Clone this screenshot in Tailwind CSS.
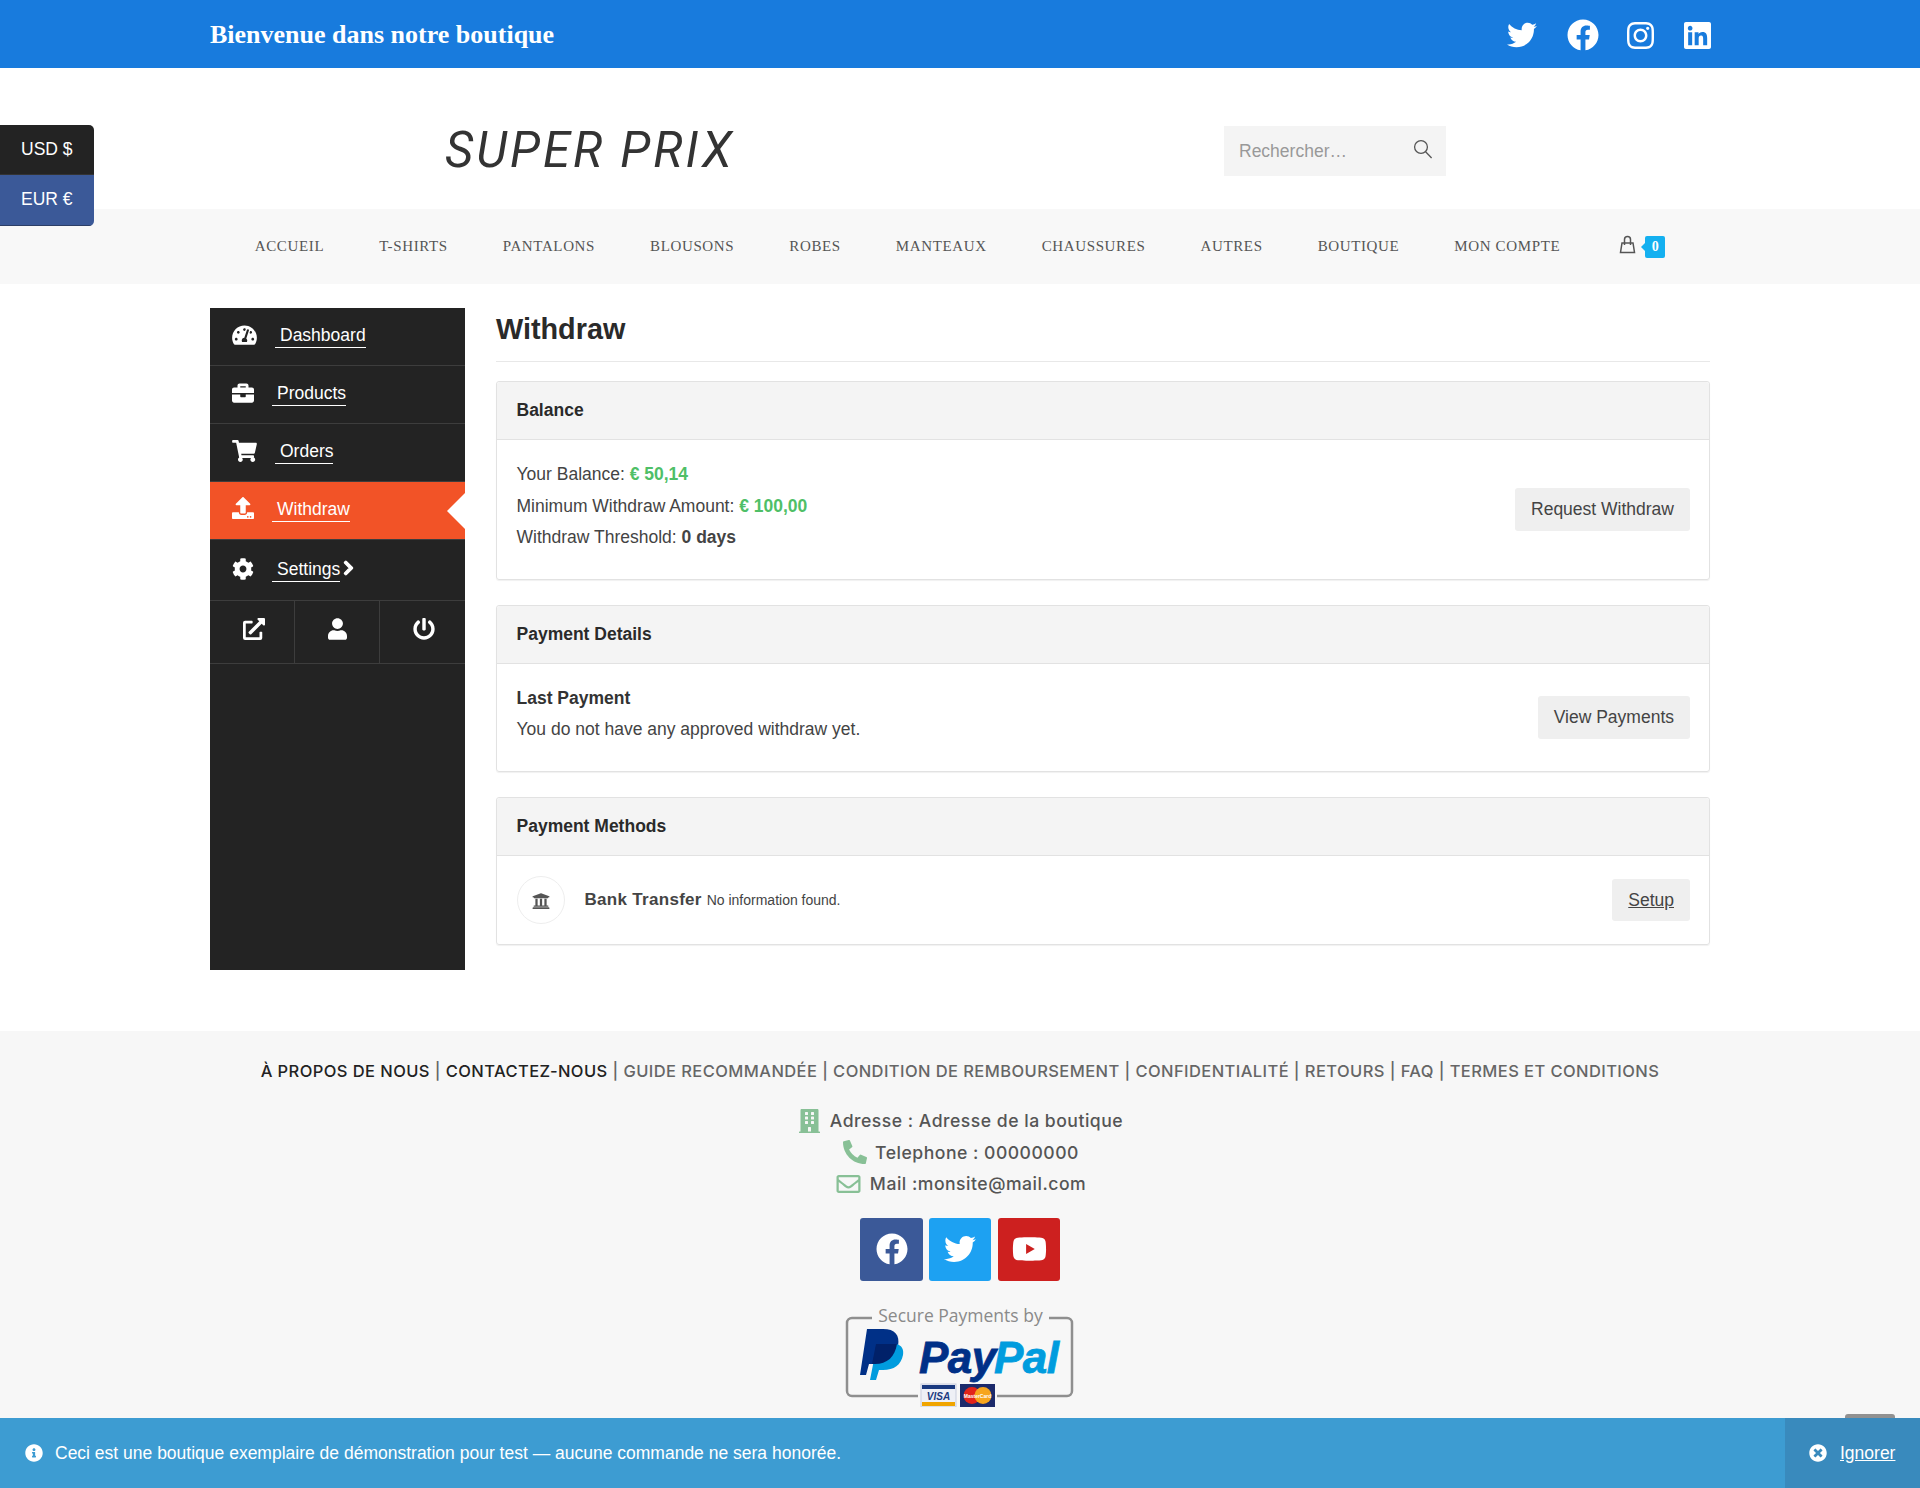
<!DOCTYPE html>
<html lang="fr">
  <head>
    <meta charset="UTF-8" />
    <title>Super Prix - Withdraw</title>
    <script src="https://cdn.jsdelivr.net/npm/@tailwindcss/browser@4"></script>
  </head>
  <body class="relative h-[1488px] overflow-hidden bg-white font-['Liberation_Sans',Arial,sans-serif] text-[17.5px] text-[#444]">
    <!-- top bar -->
    <div class="h-[68px] bg-[#187bdd]">
      <div class="mx-auto flex h-full w-[1500px] items-center justify-between">
        <span class="font-['Liberation_Serif',serif] text-[26px] font-bold text-white">Bienvenue dans notre boutique</span>
        <div class="mr-[-1px] mt-[2px] flex items-center text-white">
          <svg class="h-[30px] w-[30px] fill-current" viewBox="0 0 512 512"><path d="M459.37 151.716c.325 4.548.325 9.097.325 13.645 0 138.72-105.583 298.558-298.558 298.558-59.452 0-114.68-17.219-161.137-47.106 8.447.974 16.568 1.299 25.34 1.299 49.055 0 94.213-16.568 130.274-44.832-46.132-.975-84.792-31.188-98.112-72.772 6.498.974 12.995 1.624 19.818 1.624 9.421 0 18.843-1.3 27.614-3.573-48.081-9.747-84.143-51.98-84.143-102.985v-1.299c13.969 7.797 30.214 12.67 47.431 13.319-28.264-18.843-46.781-51.005-46.781-87.391 0-19.492 5.197-37.36 14.294-52.954 51.655 63.675 129.3 105.258 216.365 109.807-1.624-7.797-2.599-15.918-2.599-24.04 0-57.828 46.782-104.934 104.934-104.934 30.213 0 57.502 12.67 76.67 33.137 23.715-4.548 46.456-13.32 66.599-25.34-7.798 24.366-22.742 44.833-42.56 59.426 19.492-2.273 38.658-7.473 55.371-14.944-12.67 18.843-28.264 35.412-46.782 48.081z"/></svg>
          <svg class="ml-[30px] h-[32px] w-[32px] fill-current" viewBox="0 0 512 512"><path d="M504 256C504 119 393 8 256 8S8 119 8 256c0 123.78 90.69 226.38 209.25 245V327.69h-63V256h63v-54.64c0-62.15 37-96.48 93.67-96.48 27.14 0 55.52 4.84 55.52 4.84v61h-31.28c-30.8 0-40.41 19.12-40.41 38.73V256h68.78l-11 71.69h-57.78V501C413.31 482.38 504 379.78 504 256z"/></svg>
          <svg class="ml-[28px] h-[31px] w-[27px] fill-current" viewBox="0 0 448 512"><path d="M224.1 141c-63.6 0-114.9 51.3-114.9 114.9s51.3 114.9 114.9 114.9S339 319.5 339 255.9 287.7 141 224.1 141zm0 189.6c-41.1 0-74.7-33.5-74.7-74.7s33.5-74.7 74.7-74.7 74.7 33.5 74.7 74.7-33.6 74.7-74.7 74.7zm146.4-194.3c0 14.9-12 26.8-26.8 26.8-14.9 0-26.8-12-26.8-26.8s12-26.8 26.8-26.8 26.8 12 26.8 26.8zm76.1 27.2c-1.7-35.9-9.9-67.7-36.2-93.9-26.2-26.2-58-34.4-93.9-36.2-37-2.1-147.9-2.1-184.9 0-35.8 1.7-67.6 9.9-93.9 36.1s-34.4 58-36.2 93.9c-2.1 37-2.1 147.9 0 184.9 1.7 35.9 9.9 67.7 36.2 93.9s58 34.4 93.9 36.2c37 2.1 147.9 2.1 184.9 0 35.9-1.7 67.7-9.9 93.9-36.2 26.2-26.2 34.4-58 36.2-93.9 2.1-37 2.1-147.8 0-184.8zM398.8 388c-7.8 19.6-22.9 34.7-42.6 42.6-29.5 11.7-99.5 9-132.1 9s-102.7 2.6-132.1-9c-19.6-7.8-34.7-22.9-42.6-42.6-11.7-29.5-9-99.5-9-132.1s-2.6-102.7 9-132.1c7.8-19.6 22.9-34.7 42.6-42.6 29.5-11.7 99.5-9 132.1-9s102.7-2.6 132.1 9c19.6 7.8 34.7 22.9 42.6 42.6 11.7 29.5 9 99.5 9 132.1s2.7 102.7-9 132.1z"/></svg>
          <svg class="ml-[30px] h-[31px] w-[27px] fill-current" viewBox="0 0 448 512"><path d="M416 32H31.9C14.3 32 0 46.5 0 64.3v383.4C0 465.5 14.3 480 31.9 480H416c17.6 0 32-14.5 32-32.3V64.3c0-17.8-14.4-32.3-32-32.3zM135.4 416H69V202.2h66.5V416zm-33.2-243c-21.3 0-38.5-17.3-38.5-38.5S80.9 96 102.2 96c21.2 0 38.5 17.3 38.5 38.5 0 21.3-17.2 38.5-38.5 38.5zm282.1 243h-66.4V312c0-24.8-.5-56.7-34.5-56.7-34.6 0-39.9 27-39.9 54.9V416h-66.4V202.2h63.7v29.2h.9c8.9-16.8 30.6-34.5 62.9-34.5 67.2 0 79.7 44.3 79.7 101.9V416z"/></svg>
        </div>
      </div>
    </div>

    <!-- logo + search -->
    <div class="h-[141px] pt-[24px]">
      <div class="mx-auto flex h-full w-[1500px] items-center pl-[235px]">
        <span class="w-[779px] font-['Roboto',sans-serif] text-[49px] font-normal italic tracking-[3px] text-[#333]">SUPER PRIX</span>
        <div class="flex h-[50px] w-[222px] items-center justify-between bg-[#f4f4f4] pl-[15px] pr-[13px] text-[#999]">
          <span class="pt-[1px]">Rechercher…</span>
          <svg class="mb-[3px] h-[20px] w-[20px]" viewBox="0 0 20 20" fill="none" stroke="#555" stroke-width="1.3"><circle cx="8" cy="8" r="6.4"/><path d="M12.6 12.8 18.6 19"/></svg>
        </div>
      </div>
    </div>

    <!-- nav -->
    <nav class="flex h-[75px] items-center justify-center gap-[55px] bg-[#f8f8f8] font-['Liberation_Serif',serif] text-[15px] tracking-[0.63px] text-[#555]">
      <a>ACCUEIL</a>
      <a>T-SHIRTS</a>
      <a>PANTALONS</a>
      <a>BLOUSONS</a>
      <a>ROBES</a>
      <a>MANTEAUX</a>
      <a>CHAUSSURES</a>
      <a>AUTRES</a>
      <a>BOUTIQUE</a>
      <a>MON COMPTE</a>
      <div class="ml-[4px] flex items-center">
        <svg class="mb-[4px] h-[19px] w-[17px]" viewBox="0 0 17 19" fill="none" stroke="#555" stroke-width="1.5"><path d="M3 8h11l1.500 9.500h-14z"/><path d="M5.500 10V4.500a3 3 0 0 1 6 0V10"/></svg>
        <div class="relative ml-[9px] flex h-[22px] w-[20px] items-center justify-center rounded-[2px] bg-[#14b0f0] font-['Liberation_Serif',serif] text-[14px] font-bold tracking-normal text-white">
          <span class="absolute left-[-4px] top-[7px] h-0 w-0 border-y-[4px] border-r-[4px] border-y-transparent border-r-[#14b0f0]"></span>
          0
        </div>
      </div>
    </nav>

    <!-- dashboard -->
    <div class="mx-auto flex w-[1500px] items-start gap-[31px] pt-[24px]">
      <aside class="h-[662px] w-[255px] shrink-0 bg-[#232323] text-white">
        <a class="flex h-[58px] items-center gap-[18px] border-b border-[#3d3d3d] pl-[22px]">
          <svg class="mb-[3px] h-[22px] w-[25px] fill-current" viewBox="0 0 576 512"><path d="M288 32C128.94 32 0 160.94 0 320c0 52.8 14.25 102.26 39.06 144.8 5.61 9.62 16.3 15.2 27.44 15.2h443c11.14 0 21.83-5.58 27.44-15.2C561.75 422.26 576 372.8 576 320c0-159.06-128.94-288-288-288zm0 64c14.71 0 26.58 10.13 30.32 23.65-1.11 2.26-2.64 4.23-3.45 6.67l-9.22 27.67c-5.13 3.49-10.97 6.01-17.64 6.01-17.67 0-32-14.33-32-32S270.33 96 288 96zM96 384c-17.67 0-32-14.33-32-32s14.33-32 32-32 32 14.33 32 32-14.33 32-32 32zm48-160c-17.67 0-32-14.33-32-32s14.33-32 32-32 32 14.33 32 32-14.33 32-32 32zm246.77-72.41l-61.33 184C343.13 347.33 352 364.54 352 384c0 11.72-3.38 22.55-8.88 32H232.88c-5.5-9.45-8.88-20.28-8.88-32 0-33.94 26.5-61.43 59.9-63.59l61.34-184.01c4.17-12.56 17.73-19.45 30.36-15.17 12.57 4.19 19.35 17.79 15.17 30.36zm14.66 57.2l15.52-46.55c3.47-1.29 7.13-2.23 11.05-2.23 17.67 0 32 14.33 32 32s-14.33 32-32 32c-11.38-.01-20.89-6.28-26.57-15.22zM480 384c-17.67 0-32-14.33-32-32s14.33-32 32-32 32 14.33 32 32-14.33 32-32 32z"/></svg>
          <span class="border-b border-white pl-[5px] pb-[2px] leading-[20px]">Dashboard</span>
        </a>
        <a class="flex h-[58px] items-center gap-[18px] border-b border-[#3d3d3d] pl-[22px]">
          <svg class="mb-[3px] h-[22px] w-[22px] fill-current" viewBox="0 0 512 512"><path d="M320 336c0 8.84-7.16 16-16 16h-96c-8.84 0-16-7.16-16-16v-48H0v144c0 25.6 22.4 48 48 48h416c25.6 0 48-22.4 48-48V288H320v48zm144-208h-80V80c0-25.6-22.4-48-48-48H176c-25.6 0-48 22.4-48 48v48H48c-25.6 0-48 22.4-48 48v80h512v-80c0-25.6-22.4-48-48-48zm-144 0H192V96h128v32z"/></svg>
          <span class="border-b border-white pl-[5px] pb-[2px] leading-[20px]">Products</span>
        </a>
        <a class="flex h-[58px] items-center gap-[18px] border-b border-[#3d3d3d] pl-[22px]">
          <svg class="mb-[3px] h-[22px] w-[25px] fill-current" viewBox="0 0 576 512"><path d="M528.12 301.319l47.273-208C578.806 78.301 567.391 64 551.99 64H159.208l-9.166-44.81C147.758 8.021 137.93 0 126.529 0H24C10.745 0 0 10.745 0 24v16c0 13.255 10.745 24 24 24h69.883l70.248 343.435C147.325 417.1 136 435.222 136 456c0 30.928 25.072 56 56 56s56-25.072 56-56c0-15.674-6.447-29.835-16.824-40h209.647C430.447 426.165 424 440.326 424 456c0 30.928 25.072 56 56 56s56-25.072 56-56c0-22.172-12.888-41.332-31.579-50.405l5.517-24.276c3.413-15.018-8.002-29.319-23.403-29.319H218.117l-6.545-32h293.145c11.206 0 20.92-7.754 23.403-18.681z"/></svg>
          <span class="border-b border-white pl-[5px] pb-[2px] leading-[20px]">Orders</span>
        </a>
        <a class="relative flex h-[58px] items-center gap-[18px] border-b border-[#3d3d3d] bg-[#f25327] pl-[22px]">
          <svg class="mb-[5px] h-[22px] w-[22px] fill-current" viewBox="0 0 512 512"><path d="M296 384h-80c-13.3 0-24-10.7-24-24V192h-87.7c-17.8 0-26.7-21.5-14.1-34.1L242.3 5.700c7.500-7.500 19.800-7.500 27.300 0l152.200 152.200c12.600 12.600 3.700 34.100-14.100 34.100H320v168c0 13.300-10.700 24-24 24zm216-8v112c0 13.300-10.700 24-24 24H24c-13.300 0-24-10.700-24-24V376c0-13.300 10.700-24 24-24h136v8c0 30.900 25.100 56 56 56h80c30.900 0 56-25.100 56-56v-8h136c13.300 0 24 10.700 24 24zm-124 88c0-11-9-20-20-20s-20 9-20 20 9 20 20 20 20-9 20-20zm64 0c0-11-9-20-20-20s-20 9-20 20 9 20 20 20 20-9 20-20z"/></svg>
          <span class="border-b border-white pl-[5px] pb-[2px] leading-[20px]">Withdraw</span>
          <span class="absolute right-0 top-[11px] h-0 w-0 border-y-[18px] border-r-[18px] border-y-transparent border-r-white"></span>
        </a>
        <a class="flex h-[61px] items-center gap-[18px] border-b border-[#3d3d3d] pl-[22px]">
          <svg class="mb-[3px] h-[22px] w-[22px] fill-current" viewBox="0 0 512 512"><path d="M487.4 315.7l-42.6-24.6c4.3-23.2 4.3-47 0-70.2l42.6-24.6c4.9-2.8 7.1-8.6 5.5-14-11.1-35.6-30-67.8-54.7-94.6-3.8-4.1-10-5.1-14.8-2.3L380.8 110c-17.9-15.4-38.5-27.3-60.8-35.1V25.8c0-5.6-3.9-10.5-9.4-11.7-36.7-8.2-74.3-7.8-109.2 0-5.5 1.2-9.4 6.1-9.4 11.7V75c-22.2 7.9-42.8 19.8-60.8 35.1L88.7 85.5c-4.9-2.8-11-1.9-14.8 2.3-24.7 26.7-43.6 58.9-54.7 94.6-1.7 5.4.6 11.2 5.5 14L67.3 221c-4.3 23.2-4.3 47 0 70.2l-42.6 24.6c-4.9 2.8-7.1 8.6-5.5 14 11.1 35.6 30 67.8 54.7 94.6 3.8 4.1 10 5.1 14.8 2.3l42.6-24.6c17.9 15.4 38.5 27.3 60.8 35.1v49.2c0 5.6 3.9 10.5 9.4 11.7 36.7 8.2 74.3 7.8 109.2 0 5.5-1.2 9.4-6.1 9.4-11.7v-49.2c22.2-7.9 42.8-19.8 60.8-35.1l42.6 24.6c4.9 2.8 11 1.9 14.8-2.3 24.7-26.7 43.6-58.9 54.7-94.6 1.5-5.5-.7-11.3-5.6-14.1zM256 336c-44.1 0-80-35.9-80-80s35.9-80 80-80 80 35.9 80 80-35.9 80-80 80z"/></svg>
          <div class="flex items-center">
            <span class="border-b border-white pl-[5px] pb-[2px] leading-[20px]">Settings</span>
            <svg class="mb-[4px] ml-[3px] h-[16px] w-[11px] fill-current stroke-current stroke-[40]" viewBox="0 0 320 512"><path d="M285.476 272.971L91.132 467.314c-9.373 9.373-24.569 9.373-33.941 0l-22.667-22.667c-9.357-9.357-9.375-24.522-.04-33.901L188.505 256 34.484 101.255c-9.335-9.379-9.317-24.544.04-33.901l22.667-22.667c9.373-9.373 24.569-9.373 33.941 0L285.475 239.030c9.373 9.372 9.373 24.568.001 33.941z"/></svg>
          </div>
        </a>
        <div class="grid h-[63px] grid-cols-3 border-b border-[#3d3d3d]">
          <a class="flex items-center justify-center border-r border-[#3d3d3d] pb-[6px] pl-[4px]">
            <svg class="h-[22px] w-[22px] fill-current" viewBox="0 0 512 512"><path d="M432 320h-32a16 16 0 0 0-16 16v112H64V128h144a16 16 0 0 0 16-16V80a16 16 0 0 0-16-16H48a48 48 0 0 0-48 48v352a48 48 0 0 0 48 48h352a48 48 0 0 0 48-48V336a16 16 0 0 0-16-16zM488 0H360c-21.370 0-32.050 25.910-17 41l35.730 35.730L135 320.370a24 24 0 0 0 0 34L157.670 377a24 24 0 0 0 34 0l243.610-243.680L471 169c15 15 41 4.500 41-17V24a24 24 0 0 0-24-24z"/></svg>
          </a>
          <a class="flex items-center justify-center border-r border-[#3d3d3d] pb-[6px]">
            <svg class="h-[22px] w-[19px] fill-current" viewBox="0 0 448 512"><path d="M224 256c70.700 0 128-57.300 128-128S294.700 0 224 0 96 57.300 96 128s57.300 128 128 128zm89.600 32h-16.700c-22.200 10.200-46.900 16-72.900 16s-50.600-5.800-72.900-16h-16.700C60.200 288 0 348.200 0 422.400V464c0 26.500 21.500 48 48 48h352c26.500 0 48-21.500 48-48v-41.600c0-74.200-60.200-134.400-134.400-134.400z"/></svg>
          </a>
          <a class="flex items-center justify-center pb-[6px] pl-[2px]">
            <svg class="h-[22px] w-[22px] fill-current" viewBox="0 0 512 512"><path d="M400 54.100c63 45 104 118.600 104 201.900 0 136.800-110.800 247.700-247.500 248C120 504.300 8.200 393 8 256.400 7.900 173.100 48.900 99.300 111.800 54.200c11.700-8.300 28-4.800 35 7.700L162.600 90c5.900 10.500 3.100 23.800-6.600 31-41.500 30.800-68 79.600-68 134.900-.1 92.300 74.500 168.100 168 168.100 91.600 0 168.600-74.200 168-169.100-.3-51.800-24.700-101.800-68.100-134-9.700-7.200-12.400-20.500-6.400-30.900l15.800-28.100c7-12.400 23.200-16.100 34.800-7.800zM296 264V24c0-13.300-10.700-24-24-24h-32c-13.300 0-24 10.700-24 24v240c0 13.300 10.700 24 24 24h32c13.300 0 24-10.700 24-24z"/></svg>
          </a>
        </div>
      </aside>

      <main class="min-w-0 flex-1">
        <h1 class="h-[54px] border-b border-[#e8e8e8] pt-[1px] text-[28.8px] font-bold leading-[40px] text-[#2a2a2a]">Withdraw</h1>

        <section class="mt-[19px] rounded-[3px] border border-[#e2e2e2] shadow-[0_1px_1px_rgba(0,0,0,0.06)]">
          <h3 class="flex h-[58px] items-center rounded-t-[3px] border-b border-[#e2e2e2] bg-[#f4f4f4] px-[19.5px] font-bold text-[#2a2a2a]">Balance</h3>
          <div class="flex h-[139px] items-center justify-between pb-[1px] pl-[19.5px] pr-[19px]">
            <div class="pb-[5px] leading-[31.5px]">
              <div>Your Balance: <strong class="text-[#4fbf67]">€ 50,14</strong></div>
              <div>Minimum Withdraw Amount: <strong class="text-[#4fbf67]">€ 100,00</strong></div>
              <div>Withdraw Threshold: <strong>0 days</strong></div>
            </div>
            <a class="flex h-[43px] items-center rounded-[3px] bg-[#efefef] px-[16px]">Request Withdraw</a>
          </div>
        </section>

        <section class="mt-[25px] rounded-[3px] border border-[#e2e2e2] shadow-[0_1px_1px_rgba(0,0,0,0.06)]">
          <h3 class="flex h-[58px] items-center rounded-t-[3px] border-b border-[#e2e2e2] bg-[#f4f4f4] px-[19.5px] font-bold text-[#2a2a2a]">Payment Details</h3>
          <div class="flex h-[107px] items-center justify-between pl-[19.5px] pr-[19px]">
            <div class="pb-[8px] leading-[31px]">
              <div class="font-bold text-[#333]">Last Payment</div>
              <div>You do not have any approved withdraw yet.</div>
            </div>
            <a class="flex h-[43px] items-center rounded-[3px] bg-[#efefef] px-[16px]">View Payments</a>
          </div>
        </section>

        <section class="mt-[25px] rounded-[3px] border border-[#e2e2e2] shadow-[0_1px_1px_rgba(0,0,0,0.06)]">
          <h3 class="flex h-[58px] items-center rounded-t-[3px] border-b border-[#e2e2e2] bg-[#f4f4f4] px-[19.5px] font-bold text-[#2a2a2a]">Payment Methods</h3>
          <div class="flex h-[88px] items-center justify-between pl-[19.5px] pr-[19px]">
            <div class="flex items-center">
              <div class="flex h-[48px] w-[48px] items-center justify-center rounded-full border border-[#eee]">
                <svg class="mt-[1px] h-[18px] w-[18px] fill-[#555]" viewBox="0 0 512 512"><path d="M496 128v16a8 8 0 0 1-8 8h-24v12c0 6.627-5.373 12-12 12H60c-6.627 0-12-5.373-12-12v-12H24a8 8 0 0 1-8-8v-16a8 8 0 0 1 4.941-7.392l232-88a7.996 7.996 0 0 1 6.118 0l232 88A8 8 0 0 1 496 128zm-24 304H40c-13.255 0-24 10.745-24 24v16a8 8 0 0 0 8 8h464a8 8 0 0 0 8-8v-16c0-13.255-10.745-24-24-24zM96 192v192H60c-6.627 0-12 5.373-12 12v20h416v-20c0-6.627-5.373-12-12-12h-36V192h-64v192h-64V192h-64v192h-64V192H96z"/></svg>
              </div>
              <div class="ml-[20px] pb-[1px]">
                <strong class="text-[17px] tracking-[0.3px] text-[#444]">Bank Transfer</strong>
                <span class="text-[14px]">No information found.</span>
              </div>
            </div>
            <a class="flex h-[42px] items-center rounded-[3px] bg-[#efefef] px-[16px] underline">Setup</a>
          </div>
        </section>
      </main>
    </div>

    <!-- footer -->
    <footer class="mt-[61px] h-[460px] bg-[#f7f7f7] font-['Inter',sans-serif] text-[#555]">
      <div class="pt-[28px] text-center text-[16.5px] font-medium leading-[24px] tracking-[0.42px] text-[#666]">
        <span class="text-[#222]">À PROPOS DE NOUS</span> | <span class="text-[#222]">CONTACTEZ-NOUS</span> | GUIDE RECOMMANDÉE | CONDITION DE REMBOURSEMENT | CONFIDENTIALITÉ | RETOURS | FAQ | TERMES ET CONDITIONS
      </div>

      <div class="mt-[22px] flex flex-col items-center pl-[2px] text-[17.6px] font-medium leading-[31.5px] tracking-[0.5px]">
        <div class="flex items-center gap-[10px]">
          <svg class="h-[24px] w-[21px] fill-[#88c096]" viewBox="0 0 448 512"><path d="M436 480h-20V24c0-13.255-10.745-24-24-24H56C42.745 0 32 10.745 32 24v456H12c-6.627 0-12 5.373-12 12v20h448v-20c0-6.627-5.373-12-12-12zM128 76c0-6.627 5.373-12 12-12h40c6.627 0 12 5.373 12 12v40c0 6.627-5.373 12-12 12h-40c-6.627 0-12-5.373-12-12V76zm0 96c0-6.627 5.373-12 12-12h40c6.627 0 12 5.373 12 12v40c0 6.627-5.373 12-12 12h-40c-6.627 0-12-5.373-12-12v-40zm52 148h-40c-6.627 0-12-5.373-12-12v-40c0-6.627 5.373-12 12-12h40c6.627 0 12 5.373 12 12v40c0 6.627-5.373 12-12 12zm76 160h-64v-84c0-6.627 5.373-12 12-12h40c6.627 0 12 5.373 12 12v84zm64-172c0 6.627-5.373 12-12 12h-40c-6.627 0-12-5.373-12-12v-40c0-6.627 5.373-12 12-12h40c6.627 0 12 5.373 12 12v40zm0-96c0 6.627-5.373 12-12 12h-40c-6.627 0-12-5.373-12-12v-40c0-6.627 5.373-12 12-12h40c6.627 0 12 5.373 12 12v40zm0-96c0 6.627-5.373 12-12 12h-40c-6.627 0-12-5.373-12-12V76c0-6.627 5.373-12 12-12h40c6.627 0 12 5.373 12 12v40z"/></svg>
          <span>Adresse : Adresse de la boutique</span>
        </div>
        <div class="flex items-center gap-[8px]">
          <svg class="h-[24px] w-[24px] fill-[#88c096]" viewBox="0 0 512 512"><path d="M497.390 361.800l-112-48a24 24 0 0 0-28 6.900l-49.600 60.600A370.660 370.660 0 0 1 130.600 204.110l60.600-49.600a23.940 23.940 0 0 0 6.900-28l-48-112A24.160 24.160 0 0 0 122.600.610l-104 24A24 24 0 0 0 0 48c0 256.500 207.900 464 464 464a24 24 0 0 0 23.400-18.600l24-104a24.290 24.290 0 0 0-14.010-27.600z"/></svg>
          <span>Telephone : 00000000</span>
        </div>
        <div class="flex items-center gap-[9px]">
          <svg class="h-[24px] w-[25px] fill-[#88c096]" viewBox="0 0 512 512"><path d="M464 64H48C21.490 64 0 85.490 0 112v288c0 26.510 21.490 48 48 48h416c26.510 0 48-21.490 48-48V112c0-26.510-21.490-48-48-48zm0 48v40.805c-22.422 18.259-58.168 46.651-134.587 106.490-16.841 13.247-50.201 45.072-73.413 44.701-23.208.375-56.579-31.459-73.413-44.701C106.180 199.465 70.425 171.067 48 152.805V112h416zM48 400V214.398c22.914 18.251 55.409 43.862 104.938 82.646 21.857 17.205 60.134 55.186 103.062 54.955 42.717.231 80.509-37.199 103.053-54.947 49.528-38.783 82.032-64.401 104.947-82.653V400H48z"/></svg>
          <span>Mail :monsite@mail.com</span>
        </div>
      </div>

      <div class="mt-[18px] flex justify-center gap-[6px]">
        <a class="flex h-[63px] w-[63px] items-center justify-center rounded-[3px] bg-[#3b5998] text-white">
          <svg class="h-[32px] w-[32px] fill-current" viewBox="0 0 512 512"><path d="M504 256C504 119 393 8 256 8S8 119 8 256c0 123.780 90.690 226.380 209.250 245V327.690h-63V256h63v-54.640c0-62.150 37-96.480 93.670-96.480 27.140 0 55.520 4.840 55.520 4.840v61h-31.280c-30.800 0-40.410 19.120-40.410 38.730V256h68.780l-11 71.690h-57.780V501C413.310 482.380 504 379.780 504 256z"/></svg>
        </a>
        <a class="flex h-[63px] w-[62px] items-center justify-center rounded-[3px] bg-[#1da1f2] text-white">
          <svg class="h-[32px] w-[32px] fill-current" viewBox="0 0 512 512"><path d="M459.370 151.716c.325 4.548.325 9.097.325 13.645 0 138.720-105.583 298.558-298.558 298.558-59.452 0-114.680-17.219-161.137-47.106 8.447.974 16.568 1.299 25.340 1.299 49.055 0 94.213-16.568 130.274-44.832-46.132-.975-84.792-31.188-98.112-72.772 6.498.974 12.995 1.624 19.818 1.624 9.421 0 18.843-1.300 27.614-3.573-48.081-9.747-84.143-51.980-84.143-102.985v-1.299c13.969 7.797 30.214 12.670 47.431 13.319-28.264-18.843-46.781-51.005-46.781-87.391 0-19.492 5.197-37.360 14.294-52.954 51.655 63.675 129.300 105.258 216.365 109.807-1.624-7.797-2.599-15.918-2.599-24.040 0-57.828 46.782-104.934 104.934-104.934 30.213 0 57.502 12.670 76.670 33.137 23.715-4.548 46.456-13.320 66.599-25.340-7.798 24.366-22.742 44.833-42.560 59.426 19.492-2.273 38.658-7.473 55.371-14.944-12.670 18.843-28.264 35.412-46.782 48.081z"/></svg>
        </a>
        <a class="ml-[1px] flex h-[63px] w-[62px] items-center justify-center rounded-[3px] bg-[#cd201f] text-white">
          <svg class="h-[32px] w-[35px] fill-current" viewBox="0 0 576 512"><path d="M549.655 124.083c-6.281-23.650-24.787-42.276-48.284-48.597C458.781 64 288 64 288 64S117.220 64 74.629 75.486c-23.497 6.322-42.003 24.947-48.284 48.597-11.412 42.867-11.412 132.305-11.412 132.305s0 89.438 11.412 132.305c6.281 23.650 24.787 41.500 48.284 47.821C117.220 448 288 448 288 448s170.780 0 213.371-11.486c23.497-6.321 42.003-24.171 48.284-47.821 11.412-42.867 11.412-132.305 11.412-132.305s0-89.438-11.412-132.305zm-317.510 213.508V175.185l142.739 81.205-142.739 81.201z"/></svg>
        </a>
      </div>

      <!-- secure payments badge -->
      <div class="mt-[22px] flex justify-center">
        <svg width="232" height="104" viewBox="0 0 232 104">
          <path d="M28 15H8a5 5 0 0 0-5 5v68a5 5 0 0 0 5 5h66M153 93h70a5 5 0 0 0 5-5V20a5 5 0 0 0-5-5h-18" fill="none" stroke="#8f8f8f" stroke-width="2.500"/>
          <text x="116.500" y="19" text-anchor="middle" font-family="Open Sans" font-size="17.500" fill="#8a8a8a">Secure Payments by</text>
          <path d="M23 26h16c12 0 17 6 15 17-2 12-10 18-23 18h-6l-3 11H16z" fill="#003087"/>
          <path d="M33 41h19c6 1 8 6 7 11-2 10-9 15-20 15h-4l-3 10H26z" fill="#009cde"/>
          <path d="M32 41h21c-2 13-10 20-22 20h-3z" fill="#012169"/>
          <text x="75" y="70" font-family="Liberation Sans" font-size="44" font-weight="700" font-style="italic" fill="#003087" stroke="#003087" stroke-width="0.800" letter-spacing="-0.500">Pay</text>
          <text x="150" y="70" font-family="Liberation Sans" font-size="44" font-weight="700" font-style="italic" fill="#009cde" stroke="#009cde" stroke-width="0.800" letter-spacing="-0.500">Pal</text>
          <rect x="77" y="81" width="35" height="23" fill="#eef0f6" stroke="#c9cede"/>
          <rect x="78" y="82" width="33" height="4" fill="#1a3a80"/>
          <rect x="78" y="99" width="33" height="4" fill="#f0a500"/>
          <text x="94.500" y="97" text-anchor="middle" font-family="Liberation Sans" font-size="10" font-weight="700" font-style="italic" fill="#1a3a80">VISA</text>
          <rect x="116" y="81" width="35" height="23" fill="#1c2a6b"/>
          <circle cx="128" cy="92.500" r="8.500" fill="#e2231a"/>
          <circle cx="139" cy="92.500" r="8.500" fill="#f7a51c"/>
          <text x="133.500" y="95" text-anchor="middle" font-family="Liberation Sans" font-size="5" font-weight="700" fill="#fff">MasterCard</text>
        </svg>
      </div>
    </footer>

    <!-- currency switcher -->
    <div class="absolute left-0 top-[125px] w-[94px] overflow-hidden rounded-r-[5px] text-white">
      <div class="flex h-[50px] items-center border-b border-[#333] bg-[#232323] pl-[21px]">USD $</div>
      <div class="flex h-[51px] items-center border-b border-[#2c3e66] bg-[#3b5998] pb-[2px] pl-[21px]">EUR €</div>
    </div>

    <!-- scroll top tab peeking above the notice -->
    <div class="absolute bottom-[70px] right-[25px] h-[4px] w-[50px] rounded-t-[3px] bg-[#919191]"></div>

    <!-- demo store notice -->
    <div class="absolute inset-x-0 bottom-0 flex h-[70px] items-center justify-between bg-[#3d9cd2] text-white">
      <div class="flex items-center gap-[12px] pl-[25px]">
        <svg class="h-[18px] w-[18px] fill-current" viewBox="0 0 512 512"><path d="M256 8C119.043 8 8 119.083 8 256c0 136.997 111.043 248 248 248s248-111.003 248-248C504 119.083 392.957 8 256 8zm0 110c23.196 0 42 18.804 42 42s-18.804 42-42 42-42-18.804-42-42 18.804-42 42-42zm56 254c0 6.627-5.373 12-12 12h-88c-6.627 0-12-5.373-12-12v-24c0-6.627 5.373-12 12-12h12v-64h-12c-6.627 0-12-5.373-12-12v-24c0-6.627 5.373-12 12-12h64c6.627 0 12 5.373 12 12v100h12c6.627 0 12 5.373 12 12v24z"/></svg>
        <span>Ceci est une boutique exemplaire de démonstration pour test — aucune commande ne sera honorée.</span>
      </div>
      <a class="flex h-full w-[135px] items-center gap-[13px] bg-[#398abd] pl-[24px]">
        <svg class="h-[18px] w-[18px] fill-current" viewBox="0 0 512 512"><path d="M256 8C119 8 8 119 8 256s111 248 248 248 248-111 248-248S393 8 256 8zm121.600 313.100c4.700 4.700 4.700 12.300 0 17L338 377.600c-4.700 4.700-12.300 4.700-17 0L256 312l-65.100 65.600c-4.700 4.700-12.300 4.700-17 0L134.400 338c-4.700-4.700-4.700-12.300 0-17l65.600-65-65.600-65.100c-4.700-4.700-4.700-12.300 0-17l39.600-39.600c4.700-4.700 12.300-4.700 17 0l65 65.700 65.100-65.600c4.700-4.700 12.300-4.700 17 0l39.600 39.600c4.700 4.700 4.700 12.300 0 17L312 256l65.600 65.100z"/></svg>
        <span class="underline">Ignorer</span>
      </a>
    </div>
  </body>
</html>
